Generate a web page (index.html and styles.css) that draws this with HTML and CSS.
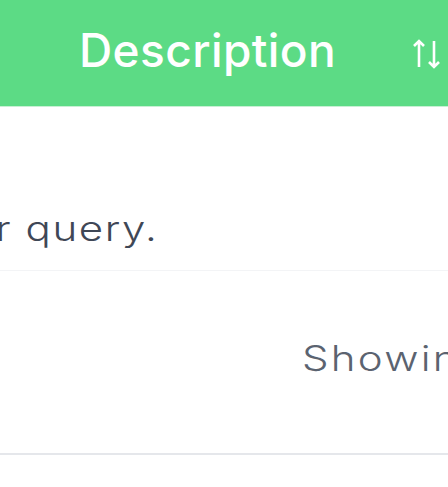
FILE: index.html
```html
<!DOCTYPE html>
<html>
<head>
<meta charset="utf-8">
<link rel="stylesheet" href="styles.css">
</head>
<body>
<div class="table">
  <div class="head">
    <span class="title">Description</span>
    <svg class="sort" viewBox="0 0 30 30" width="30" height="30" aria-hidden="true">
      <path d="M7 28V2M2 7L7 2l5 5" fill="none" stroke="#fff" stroke-width="2.6"/>
      <path d="M22 2v26M17 23L22 28l5-5" fill="none" stroke="#fff" stroke-width="2.6"/>
    </svg>
  </div>
  <div class="empty">
    <div class="empty-box">
      <span class="empty-text">No results found for your query.</span>
    </div>
  </div>
  <div class="foot">
    <span class="foot-text">Showing 0 results</span>
  </div>
</div>
</body>
</html>
```
FILE: styles.css
```css
html, body {
  margin: 0;
  padding: 0;
  background: #fff;
  overflow: hidden;
}
.table {
  width: 448px;
  font-family: Inter, "Noto Sans", sans-serif;
}
.head {
  height: 107px;
  background: #5cdb85;
  border-bottom: 1px solid #c8f0d4;
  display: flex;
  align-items: center;
  padding-left: 79px;
  box-sizing: border-box;
  white-space: nowrap;
}
.title {
  color: #fff;
  font-size: 46px;
  font-weight: 500;
  letter-spacing: 0.4px;
  margin-top: -6px;
}
.sort {
  margin-left: 76px;
  flex: none;
  margin-top: 2px;
}
.empty {
  height: 164px;
  border-bottom: 1px solid #f3f4f6;
  box-sizing: border-box;
}
.empty-box {
  width: 157px;
  display: flex;
  justify-content: flex-end;
  white-space: nowrap;
}
.empty-text {
  display: inline-block;
  color: #3f4756;
  font-size: 35px;
  font-weight: 300;
  letter-spacing: 1.3px;
  margin-right: -1px;
  margin-top: 100px;
  transform: scaleX(1.2);
  transform-origin: right center;
}
.foot {
  height: 184px;
  border-bottom: 2px solid #e5e7eb;
  box-sizing: border-box;
  padding-left: 302px;
  white-space: nowrap;
  overflow: hidden;
}
.foot-text {
  display: inline-block;
  color: #5b6370;
  font-size: 35px;
  font-weight: 300;
  letter-spacing: 1.9px;
  padding-top: 66px;
  transform: scaleX(1.2);
  transform-origin: left center;
}
```
